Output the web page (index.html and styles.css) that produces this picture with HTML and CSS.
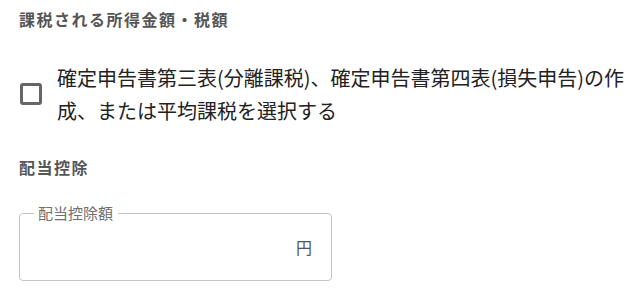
FILE: index.html
```html
<!DOCTYPE html>
<html lang="ja">
<head>
    <meta charset="UTF-8">
    <meta name="viewport" content="width=device-width, initial-scale=1.0">
    <title>課税される所得金額・税額</title>
    <link rel="stylesheet" href="styles.css">
</head>
<body>
    <div class="container">
        <h2 class="section-title">課税される所得金額・税額</h2>

        <label class="check-row">
            <span class="check-box"></span>
            <span class="check-label">確定申告書第三表(分離課税)、確定申告書第四表(損失申告)の作成、または平均課税を選択する</span>
        </label>

        <h2 class="section-title second">配当控除</h2>

        <fieldset class="outlined-field">
            <legend>配当控除額</legend>
            <div class="field-row">
                <input type="text" class="amount-input">
                <span class="unit">円</span>
            </div>
        </fieldset>
    </div>
</body>
</html>
```

FILE: styles.css
```css
body {
    margin: 0;
    font-family: "Noto Sans CJK JP", "Noto Sans", sans-serif;
    background-color: #fff;
    color: #222;
}
.container {
    padding: 7px 0 0 19px;
}
.section-title {
    margin: 0;
    font-size: 16px;
    line-height: 24px;
    font-weight: bold;
    letter-spacing: 1.5px;
    color: #555;
}
.section-title.second {
    margin-top: 28px;
}
.check-row {
    display: flex;
    align-items: center;
    margin-top: 30px;
    cursor: pointer;
}
.check-box {
    flex: none;
    width: 22px;
    height: 22px;
    box-sizing: border-box;
    margin-left: 1px;
    border: 3px solid #666;
    border-radius: 3px;
}
.check-label {
    margin-left: 15px;
    font-size: 20px;
    line-height: 33px;
    color: #222;
}
.outlined-field {
    width: 313px;
    box-sizing: border-box;
    min-width: 0;
    margin: 25px 0 0 0;
    padding: 0 19px 0 14px;
    border: 1px solid #c4c4c4;
    border-radius: 4px;
}
.outlined-field legend {
    padding: 0 5px 0 4px;
    font-size: 15px;
    line-height: 18px;
    color: #707070;
}
.field-row {
    display: flex;
    align-items: center;
    padding: 13px 0 21px 0;
}
.amount-input {
    flex-grow: 1;
    min-width: 0;
    border: none;
    outline: none;
    font-size: 16px;
    line-height: 24px;
    padding: 0;
    font-family: inherit;
}
.unit {
    font-size: 16px;
    line-height: 24px;
    color: #555;
}
```
